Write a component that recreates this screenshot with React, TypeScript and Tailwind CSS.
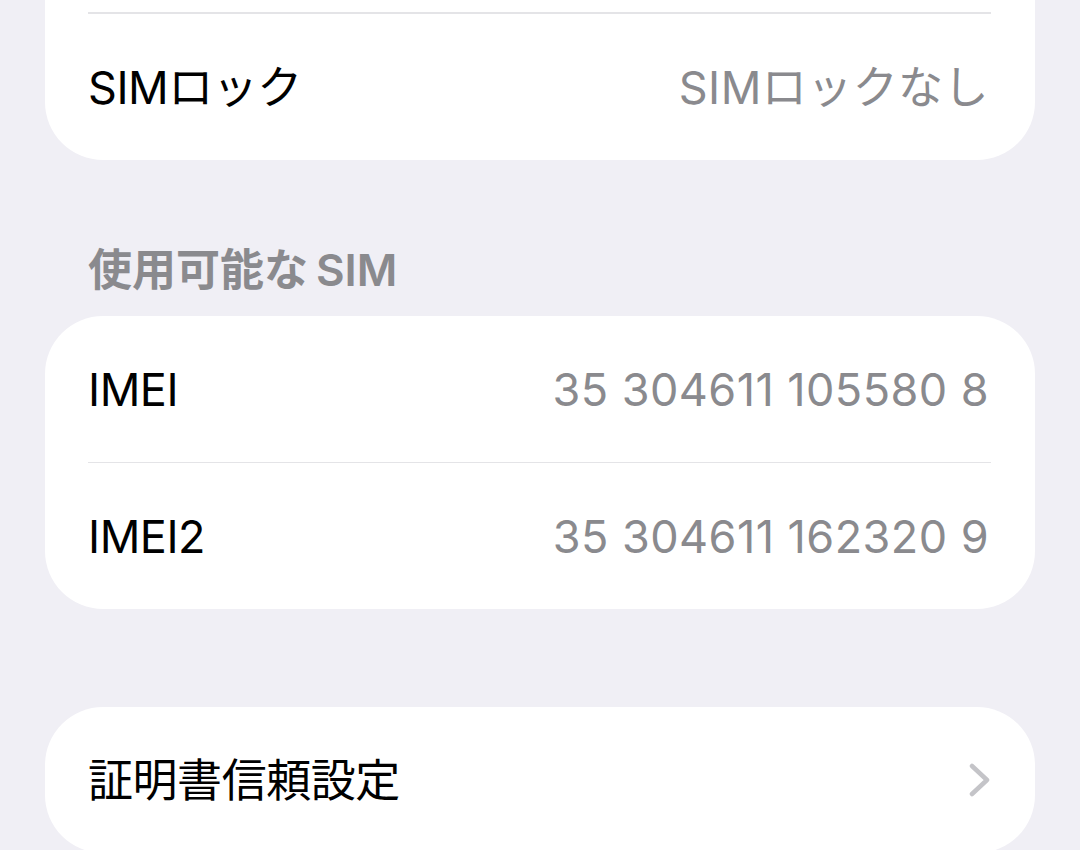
const font = { fontFamily: 'Inter, "Noto Sans CJK JP", sans-serif' };

function Chevron() {
  return (
    <svg width="22" height="34" viewBox="0 0 22 34" fill="none" className="-mr-[2px]">
      <path d="M3 3 L18 17 L3 31" stroke="#c4c4c8" strokeWidth="4.5" strokeLinecap="round" strokeLinejoin="round" />
    </svg>
  );
}

function Row({ label, value, chevron }: { label: string; value?: string; chevron?: boolean }) {
  return (
    <div className="flex h-[146px] items-center justify-between pl-[43px] pr-[46px]">
      <span className="text-[45px] leading-none text-black tracking-[-0.01em]">{label}</span>
      {value && <span className="text-[45px] leading-none text-[#8a8a8e] tracking-[0.01em]">{value}</span>}
      {chevron && <Chevron />}
    </div>
  );
}

function Divider() {
  return <div className="ml-[43px] mr-[44px] h-[2px] bg-[#e4e4e7]" />;
}

export default function App() {
  return (
    <div style={font} className="w-[1080px] h-[850px] overflow-hidden bg-[#f0eff5] px-[45px]">
      {/* Device info group, scrolled partly out of view */}
      <div className="-mt-[134px] bg-white rounded-[58px]">
        <div className="h-[146px]" />
        <Divider />
        <Row label="SIMロック" value="SIMロックなし" />
      </div>

      <div className="pt-[88px] pb-[24px] pl-[43px]">
        <h2 className="text-[44px] leading-none font-semibold text-[#8a8a8e]">
          使用可能な<span className="ml-[8px]">SIM</span>
        </h2>
      </div>

      <div className="bg-white rounded-[58px]">
        <Row label="IMEI" value="35 304611 105580 8" />
        <div className="ml-[43px] mr-[44px] h-[1px] bg-[#e4e4e7]" />
        <Row label="IMEI2" value="35 304611 162320 9" />
      </div>

      <div className="mt-[98px] bg-white rounded-[58px]">
        <Row label="証明書信頼設定" chevron />
      </div>
    </div>
  );
}
